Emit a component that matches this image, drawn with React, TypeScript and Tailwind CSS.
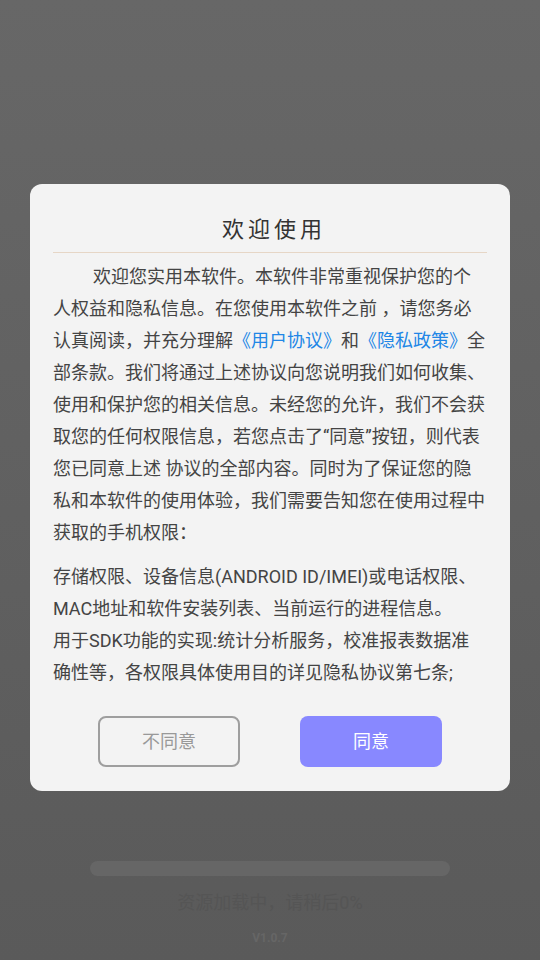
import React from "react";

const font = { fontFamily: 'Roboto, "Noto Sans CJK SC", "Noto Sans", sans-serif' };

export default function App() {
  return (
    <div
      className="relative w-[540px] h-[960px] overflow-hidden bg-gradient-to-b from-[#676767] to-[#5a5a5a]"
      style={font}
      lang="zh-CN"
    >
      {/* background page */}
      <div className="flex h-full flex-col items-center justify-end pb-[14px]">
        <div className="h-[15px] w-[360px] rounded-full bg-[#666666]" />
        <div className="mt-[15px] text-[18px] leading-[24px] text-[#555555]">资源加载中，请稍后0%</div>
        <div className="mt-[15px] text-[12px] font-bold leading-[16px] text-[#666666]">V1.0.7</div>
      </div>

      {/* modal */}
      <div className="absolute left-[30px] top-[184px] w-[480px] rounded-[12px] bg-[#f3f3f3] px-[23px] pt-[30px] pb-[24px]">
        <div className="text-center text-[22px] leading-[32px] tracking-[4px] text-[#333333] pl-[8px]">欢迎使用</div>
        <div className="mt-[6px] h-px bg-[#e6d6c6]" />
        <div className="mt-[8px] text-[18px] leading-[32px] text-[#444444]">
          <p className="indent-[40px]">
            欢迎您实用本软件。本软件非常重视保护您的个人权益和隐私信息。在您使用本软件之前 ，请您务必认真阅读，并充分理解
            <span className="text-[#2186e6]">《用户协议》</span>和<span className="text-[#2186e6]">《隐私政策》</span>
            全部条款。我们将通过上述协议向您说明我们如何收集、使用和保护您的相关信息。未经您的允许，我们不会获取您的任何权限信息，若您点击了“同意”按钮，则代表您已同意上述 协议的全部内容。同时为了保证您的隐私和本软件的使用体验，我们需要告知您在使用过程中获取的手机权限：
          </p>
          <p className="mt-[12px]">
            存储权限、设备信息(ANDROID ID/IMEI)或电话权限、MAC地址和软件安装列表、当前运行的进程信息。
            <br />
            用于SDK功能的实现:统计分析服务，校准报表数据准确性等，各权限具体使用目的详见隐私协议第七条;
          </p>
        </div>
        <div className="mt-[27px] flex justify-center gap-[60px]">
          <button className="flex h-[51px] w-[142px] items-center justify-center rounded-[8px] border-2 border-[#9e9e9e] text-[18px] text-[#999999]">
            不同意
          </button>
          <button className="flex h-[51px] w-[142px] items-center justify-center rounded-[8px] bg-[#8888ff] text-[18px] text-white">
            同意
          </button>
        </div>
      </div>
    </div>
  );
}
